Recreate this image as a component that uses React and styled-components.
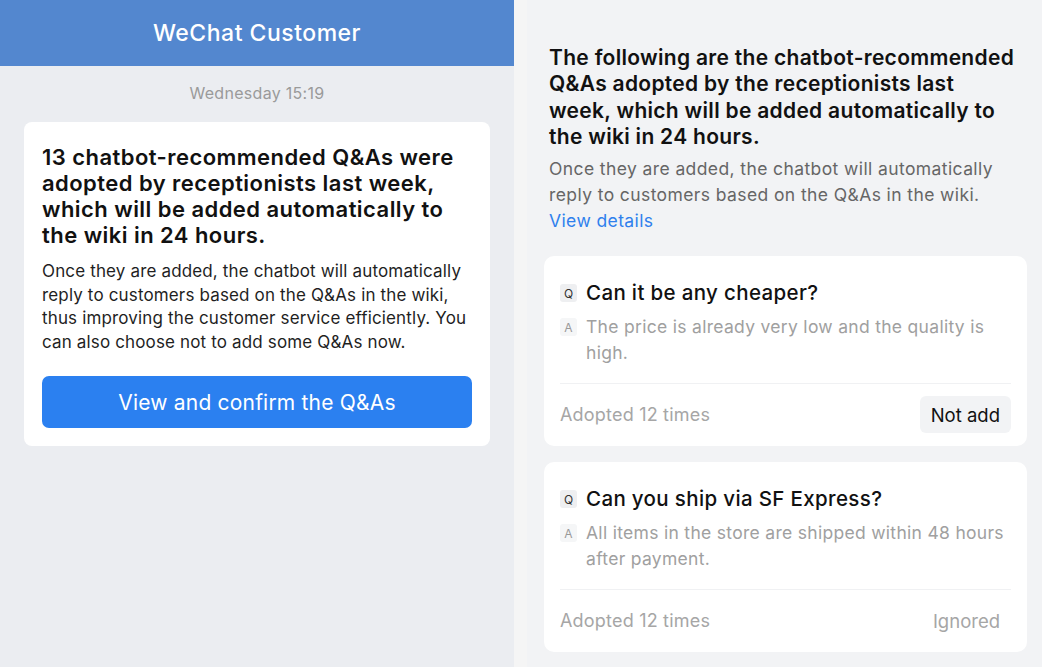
import styled, { createGlobalStyle } from "styled-components"

const Global = createGlobalStyle`
    html, body {
        margin: 0;
        padding: 0;
    }
    body {
        font-family: Inter, "Noto Sans", sans-serif;
        -webkit-font-smoothing: antialiased;
    }
`

const Page = styled.div`
    display: flex;
    width: 1042px;
    height: 667px;
    overflow: hidden;
`

const ChatPanel = styled.div`
    width: 514px;
    flex-shrink: 0;
    background-color: #ebedf1;
    display: flex;
    flex-direction: column;
`

const Header = styled.div`
    height: 66px;
    background-color: #5387cf;
    color: white;
    font-size: 23px;
    font-weight: 500;
    letter-spacing: 0.5px;
    display: flex;
    justify-content: center;
    align-items: center;
`

const Time = styled.div`
    text-align: center;
    color: #9a9a9a;
    font-size: 16px;
    line-height: 20px;
    letter-spacing: 0.3px;
    margin: 17px 0 19px;
`

const Message = styled.div`
    margin: 0 24px;
    background-color: white;
    border-radius: 8px;
    padding: 22px 18px 18px;
`

const MessageTitle = styled.h1`
    margin: 0;
    font-size: 22px;
    line-height: 26px;
    font-weight: 600;
    letter-spacing: 0.45px;
    color: #111;
`

const MessageText = styled.p`
    margin: 12px 0 22px;
    font-size: 17px;
    line-height: 23.5px;
    color: #1f1f1f;
    letter-spacing: 0.15px;
`

const PrimaryButton = styled.button`
    width: 100%;
    height: 52px;
    border: none;
    border-radius: 7px;
    background-color: #2b80f0;
    color: white;
    font-family: inherit;
    font-size: 21px;
    letter-spacing: 0.2px;
`

const Gap = styled.div`
    width: 13px;
    flex-shrink: 0;
    background-color: #f5f5f5;
`

const WikiPanel = styled.div`
    flex: 1;
    background-color: #f2f3f5;
    padding: 45px 15px 0 17px;
`

const Intro = styled.div`
    padding: 0 10px 0 5px;
`

const IntroTitle = styled.h2`
    margin: 0;
    font-size: 21px;
    line-height: 26.3px;
    font-weight: 600;
    letter-spacing: 0.3px;
    color: #111;
`

const IntroText = styled.p`
    margin: 6px 0 0;
    font-size: 17.5px;
    line-height: 26px;
    letter-spacing: 0.4px;
    color: #666;
`

const Link = styled.a`
    display: block;
    color: #2f80ed;
    font-size: 17.5px;
    line-height: 26px;
    letter-spacing: 0.4px;
    text-decoration: none;
`

const CardList = styled.div`
    margin-top: 22px;
    display: flex;
    flex-direction: column;
    gap: 16px;
`

const Card = styled.div`
    background-color: white;
    border-radius: 10px;
    padding: 23px 16px 13px;
`

const Row = styled.div`
    display: flex;
    align-items: flex-start;
    gap: 9px;
`

const Badge = styled.span`
    flex-shrink: 0;
    width: 17px;
    height: 18px;
    margin-top: ${(p) => p.$top}px;
    border-radius: 3px;
    background-color: ${(p) => (p.$q ? "#eeeff1" : "#f5f6f7")};
    color: ${(p) => (p.$q ? "#333" : "#999")};
    font-size: 12px;
    display: flex;
    justify-content: center;
    align-items: center;
`

const Question = styled.div`
    font-size: 20.5px;
    line-height: 28px;
    font-weight: 500;
    letter-spacing: 0.35px;
    color: #111;
`

const Answer = styled.div`
    font-size: 17.5px;
    line-height: 26px;
    letter-spacing: 0.3px;
    color: #a0a0a0;
`

const AnswerRow = styled(Row)`
    margin-top: 7px;
`

const Footer = styled.div`
    margin-top: 17px;
    padding-top: 12px;
    border-top: 1px solid #f0f1f3;
    display: flex;
    justify-content: space-between;
    align-items: center;
`

const Count = styled.span`
    font-size: 18px;
    letter-spacing: 0.2px;
    color: #a6a6a6;
`

const Action = styled.span`
    height: 37px;
    padding: 0 11px;
    border-radius: 6px;
    background-color: ${(p) => (p.$filled ? "#f2f3f5" : "transparent")};
    color: ${(p) => (p.$filled ? "#111" : "#a6a6a6")};
    font-size: 18.5px;
    display: flex;
    align-items: center;
`

const items = [
    {
        q: "Can it be any cheaper?",
        a: "The price is already very low and the quality is high.",
        action: "Not add",
        filled: true,
    },
    {
        q: "Can you ship via SF Express?",
        a: "All items in the store are shipped within 48 hours after payment.",
        action: "Ignored",
        filled: false,
    },
]

const App = () => {
    return (
        <Page>
            <Global />
            <ChatPanel>
                <Header>WeChat Customer</Header>
                <Time>Wednesday 15:19</Time>
                <Message>
                    <MessageTitle>
                        13 chatbot-recommended Q&amp;As were adopted by receptionists last week, which will be added automatically to the wiki in 24 hours.
                    </MessageTitle>
                    <MessageText>
                        Once they are added, the chatbot will automatically reply to customers based on the Q&amp;As in the wiki, thus improving the customer service efficiently. You can also choose not to add some Q&amp;As now.
                    </MessageText>
                    <PrimaryButton>View and confirm the Q&amp;As</PrimaryButton>
                </Message>
            </ChatPanel>
            <Gap />
            <WikiPanel>
                <Intro>
                    <IntroTitle>
                        The following are the chatbot-recommended Q&amp;As adopted by the receptionists last week, which will be added automatically to the wiki in 24 hours.
                    </IntroTitle>
                    <IntroText>
                        Once they are added, the chatbot will automatically reply to customers based on the Q&amp;As in the wiki.
                    </IntroText>
                    <Link href="#">View details</Link>
                </Intro>
                <CardList>
                    {items.map((item) => (
                        <Card key={item.q}>
                            <Row>
                                <Badge $q $top={5}>Q</Badge>
                                <Question>{item.q}</Question>
                            </Row>
                            <AnswerRow>
                                <Badge $top={4}>A</Badge>
                                <Answer>{item.a}</Answer>
                            </AnswerRow>
                            <Footer>
                                <Count>Adopted 12 times</Count>
                                <Action $filled={item.filled}>{item.action}</Action>
                            </Footer>
                        </Card>
                    ))}
                </CardList>
            </WikiPanel>
        </Page>
    )
}

export default App
